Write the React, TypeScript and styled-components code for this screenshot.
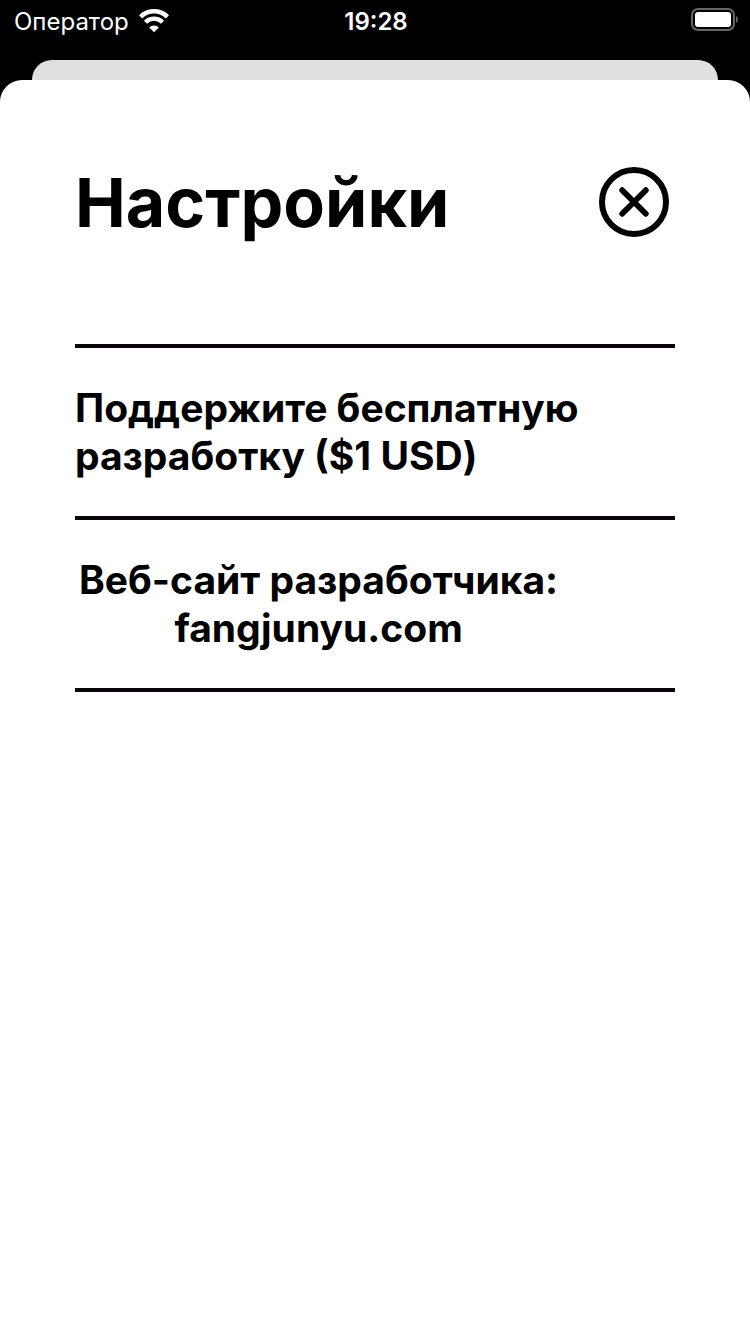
import React from "react";
import styled, { createGlobalStyle, css } from "styled-components";

const GlobalStyle = createGlobalStyle`
  *, *::before, *::after { box-sizing: border-box; }
  body {
    margin: 0;
    background: #000;
    color: #000;
    font-family: Inter, "Liberation Sans", sans-serif;
  }
`;

const Screen = styled.div`
  display: flex;
  flex-direction: column;
  min-height: 100vh;
`;

const StatusBar = styled.header`
  display: grid;
  grid-template-columns: 1fr auto 1fr;
  align-items: center;
  height: 60px;
  padding: 0 12px 16px 14px;
  color: #fff;
  font-size: 24px;
  line-height: 32px;
`;

const Carrier = styled.div`
  display: flex;
  align-items: center;
  gap: 10px;
`;

const Clock = styled.time`
  font-weight: 600;
`;

const Battery = styled.svg`
  justify-self: end;
`;

const BackCard = styled.div`
  height: 20px;
  margin: 0 32px;
  border-radius: 20px 20px 0 0;
  background: #e0e0e0;
`;

const Sheet = styled.main`
  flex: 1;
  padding: 80px 75px;
  border-radius: 22px 22px 0 0;
  background: #fff;
`;

const SheetHeader = styled.div`
  display: flex;
  align-items: center;
  justify-content: space-between;
  height: 84px;
  margin-bottom: 100px;
`;

const Title = styled.h1`
  margin: 0;
  font-size: 68px;
  font-weight: 700;
  line-height: 84px;
`;

const CloseButton = styled.button`
  display: flex;
  padding: 6px;
  border: 0;
  background: none;
  color: inherit;
  cursor: pointer;
`;

const List = styled.ul`
  margin: 0;
  padding: 0;
  list-style: none;
  border-top: 4px solid #080608;
`;

const Row = styled.li`
  display: flex;
  padding: 36px 0;
  border-bottom: 4px solid #080608;
`;

const rowAction = css`
  max-width: 540px;
  border: 0;
  background: none;
  color: inherit;
  font-family: inherit;
  font-size: 39px;
  font-weight: 700;
  line-height: 48px;
  text-decoration: none;
  cursor: pointer;
`;

const SupportButton = styled.button`
  ${rowAction}
  padding: 0;
  text-align: left;
`;

const SiteLink = styled.a`
  ${rowAction}
  padding: 0 4px;
  text-align: center;
`;

const WifiIcon = () => (
  <svg width="30" height="26" viewBox="0 0 30 26" fill="none" aria-label="Wi-Fi" role="img">
    <path d="M1.600 7.800a19 19 0 0 1 26.800 0" stroke="#fff" strokeWidth="4.600" />
    <path d="M6.500 13.200a12 12 0 0 1 17 0" stroke="#fff" strokeWidth="4.400" />
    <path d="M10.200 18.400a6.900 6.900 0 0 1 9.600 0L15 23.200z" fill="#fff" />
  </svg>
);

const BatteryIcon = () => (
  <Battery width="48" height="28" viewBox="0 0 48 28" fill="none" aria-label="Battery" role="img">
    <rect x="2" y="1" width="42" height="21" rx="6" stroke="#666" strokeWidth="2" />
    <rect x="5" y="4" width="36" height="15" rx="3" fill="#fff" />
    <path d="M46 8c2.600 1.200 2.600 6 0 7z" fill="#666" />
  </Battery>
);

const CloseIcon = () => (
  <svg width="70" height="70" viewBox="0 0 70 70" fill="none" stroke="currentColor" aria-hidden="true">
    <circle cx="35" cy="35" r="32" strokeWidth="6" />
    <path d="M23.200 23.200 46.800 46.800M46.800 23.200 23.200 46.800" strokeWidth="5.800" strokeLinecap="round" />
  </svg>
);

export default function App() {
  return (
    <>
      <GlobalStyle />
      <Screen>
        <StatusBar>
          <Carrier>
            <span>Оператор</span>
            <WifiIcon />
          </Carrier>
          <Clock>19:28</Clock>
          <BatteryIcon />
        </StatusBar>
        <BackCard />
        <Sheet>
          <SheetHeader>
            <Title>Настройки</Title>
            <CloseButton type="button" aria-label="Закрыть">
              <CloseIcon />
            </CloseButton>
          </SheetHeader>
          <List>
            <Row>
              <SupportButton type="button">
                Поддержите бесплатную
                <br />
                разработку ($1 USD)
              </SupportButton>
            </Row>
            <Row>
              <SiteLink href="https://fangjunyu.com">
                Веб-сайт разработчика:
                <br />
                fangjunyu.com
              </SiteLink>
            </Row>
          </List>
        </Sheet>
      </Screen>
    </>
  );
}
